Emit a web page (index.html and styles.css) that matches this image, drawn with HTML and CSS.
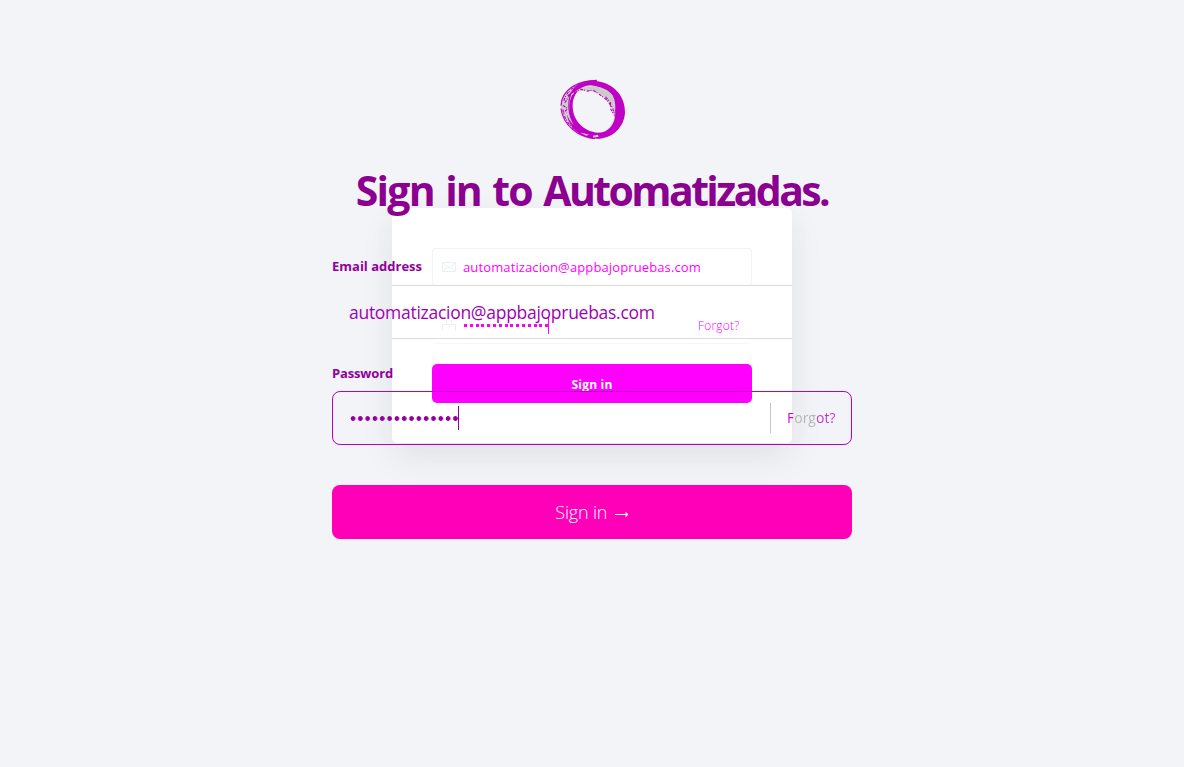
FILE: index.html
```html
<!DOCTYPE html>
<html lang="en">
<head>
<meta charset="utf-8">
<title>Sign in to Automatizadas.</title>
<link rel="stylesheet" href="styles.css">
</head>
<body>
<main class="stage">
  <section class="layer compact">
    <div class="card">
      <div class="mini-field">
        <svg class="mini-icon" width="14" height="10" viewBox="0 0 14 10"><path d="M.5.5h13v9H.5zM1 1l6 5 6-5M1 9l4-4m8 4L9 5"/></svg>
        <span class="mini-email">automatizacion@appbajopruebas.com</span>
      </div>
      <div class="mini-field mini-password">
        <svg class="mini-icon" width="14" height="14" viewBox="0 0 14 14"><path d="M.5 13V6.500h3m7 0h3V13M3 6.500h8M4.500 5V2m5 3V2M6 8.500h2"/></svg>
        <span class="mini-dots"></span><span class="mini-caret"></span>
        <span class="mini-forgot">Forgot?</span>
      </div>
      <button class="mini-button"><span>Sign in</span></button>
    </div>
  </section>
  <section class="layer wide">
    <svg class="logo" width="66" height="61" viewBox="0 0 68 62">
      <path class="ring-grey" fill-rule="evenodd" d="M1 27C2 11 16 0 36 1c17 1 29 14 30 29 1 17-11 31-29 31C18 60 1 45 1 27zM12 27c0 17 13 27 26 28 12 0 18-10 18-20C56 20 45 8 31 7 19 7 12 16 12 27z"/>
      <path class="ring" fill-rule="evenodd" d="M15 8C23 1 34 0 43 3c15 4 24 16 24 31-1 16-14 28-31 27C21 60 9 50 7 35c-1-10 1-19 8-27zM13 27c0 16 12 27 26 28 11 0 18-9 18-20C55 17 44 6 30 6c-11 1-17 11-17 21z"/>
      <path class="ring-grey" d="M15 13C21 8 28 7 36 7c8 1 14 4 18 9 3 5 4 13 2 22-2-10-7-16-13-21-8-6-17-7-28-4zM7 21c-3 11 1 20 7 26C9 37 7 25 15 13c-4 2-6 5-8 8zM22 55l8 2-3 1-6-3zm12 3 5-1 1 2-6 1z"/>
      <path class="stroke" d="M1 27C2 10 19 1 38 1M1 30c2 17 18 30 35 31M11 15C7 27 9 43 20 52M13 16C7 29 13 48 30 55"/>
      <path class="stroke" stroke-dasharray="3 1 1 2" d="M4 22C7 11 18 4 29 3M3 31c1 9 6 16 13 22M15 14l6-4 7 2 6-1 6 4 8 6 6 8 3 9M5 24l7-11M3 27l5 3-4 4M47 18l5 6v6l4 7M8 17l6-5"/>
    </svg>
    <h1 class="title"><span>Sign in to <span class="title-name">Automatizadas.</span></span></h1>
    <label class="label"><span class="label-email">Email address</span></label>
    <div class="email-box"><span class="email">automatizacion@appbajopruebas.com</span></div>
    <label class="label label-second"><span class="label-password">Password</span></label>
    <div class="password-box">
      <span class="dots"></span><span class="caret"></span>
      <span class="forgot">Forgot?</span>
    </div>
    <button class="submit"><span>Sign in <svg class="arrow" width="14" height="8" viewBox="0 0 14 8"><path d="M0 4.500h13M10.500 2.500l2 2-2 2"/></svg></span></button>
  </section>
</main>
</body>
</html>
```
FILE: styles.css
```css
* { box-sizing: border-box; }
body { margin: 0; background: #f2f4f8; font-family: "Open Sans", "Noto Sans", sans-serif; }
button { border: 0; font-family: inherit; padding: 0; }
span { white-space: nowrap; }
.stage { display: grid; justify-items: center; align-items: start; height: 767px; overflow: hidden; }
.layer { grid-area: 1 / 1; }
.compact { padding-top: 208px; }
.card {
  display: flex; flex-direction: column; gap: 20px;
  width: 400px; height: 235px; padding: 40px;
  background: #fff; border-radius: 5px;
  box-shadow: 0 15px 35px rgba(40, 40, 30, .07), 0 5px 35px rgba(50, 50, 90, .02);
}
.mini-field {
  display: flex; align-items: center; height: 38px; padding-left: 9px;
  border: 1px solid #f1f5f7; border-bottom-color: #d7e5ec; border-radius: 4px;
  color: #f0f;
}
.mini-icon { margin-right: 7px; fill: none; stroke: #e9eff3; }
.mini-email { font-size: 13px; letter-spacing: .12px; }
.mini-password {
  border-color: transparent transparent #f5f6f7;
}
.mini-dots {
  width: 84px; height: 3px; margin-left: 1px;
  background: repeating-linear-gradient(90deg, #f0f 0 3px, transparent 3px 5.8px);
}
.mini-caret { width: 1px; height: 17px; background: #f0f; }
.mini-forgot { margin-left: 149px; font-size: 12px; font-weight: 300; letter-spacing: .2px; }
.mini-button {
  height: 39px; flex: none; border-radius: 5px;
  background: #f0f; color: #fff; font-size: 12px; font-weight: 700; line-height: 41px; letter-spacing: .2px;
}
.wide { display: flex; flex-direction: column; width: 520px; padding-top: 79px; }
.logo { margin-left: 228px; }
.ring { fill: #c000c4; }
.ring-grey { fill: #ccc; }
.stroke { fill: none; stroke: #c000c4; stroke-width: 1.2; }
.title {
  height: 60px; margin: 20px 0 0; line-height: 60px; text-align: center;
  font-size: 41px; font-weight: 700; letter-spacing: -1.8px; word-spacing: 2.5px; color: #8c0090;
}
.title-name { letter-spacing: -2.6px; }
.label {
  height: 20px; margin-top: 36px; line-height: 20px;
  font-size: 13px; font-weight: 700; color: #92009a;
}
.email-box {
  display: flex; align-items: center; height: 54px; margin: 9px 60px 0;
  border: solid #ddd; border-width: 1px 0;
}
.email { margin-left: -43px; font-size: 17.5px; letter-spacing: -.28px; color: #a000b4; }
.label-second { margin-top: 24px; }
.label-password { letter-spacing: -.15px; }
.password-box {
  display: flex; align-items: center; height: 54px; margin-top: 8px; padding-left: 17px;
  border: 1px solid #b800c0; border-radius: 8px;
}
.dots {
  width: 108px; height: 5px;
  background: radial-gradient(circle at 3px 2.5px, #95009c 2px, transparent 2.7px) 0 0 / 7.32px 5px repeat-x;
}
.caret { width: 1px; height: 24px; background: #92009a; }
.forgot {
  height: 30px; margin-left: 311px; padding-left: 16px; border-left: 1px solid #c4c4c4;
  font-size: 14px; line-height: 30px; color: transparent;
  background: linear-gradient(90deg, #d000d8 6px, #b4b4b4 6px 30px, #c632d0 30px) content-box text;
}
.submit {
  height: 54px; margin-top: 40px; border-radius: 8px;
  background: #ff00b8; color: #fff; font-size: 18px; font-weight: 300; line-height: 55px; letter-spacing: -.2px;
}
.arrow { margin-left: 3px; vertical-align: 1px; fill: none; stroke: #fff; stroke-width: 1.2; }
```
